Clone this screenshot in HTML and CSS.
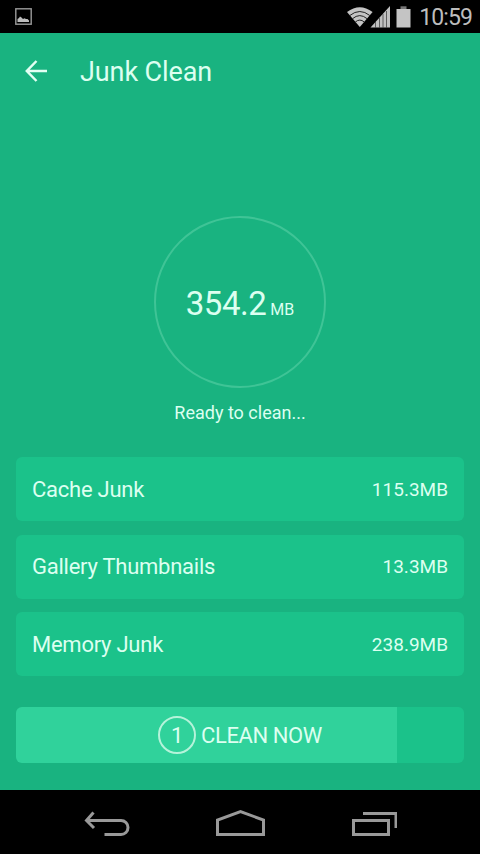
FILE: index.html
```
<!DOCTYPE html>
<html lang="en">
<head>
<meta charset="UTF-8">
<title>Junk Clean</title>
<link rel="stylesheet" href="styles.css">
</head>
<body>
<div class="phone">
  <div class="status">
    <svg class="picture" width="17" height="17" viewBox="0 0 17 17">
      <rect x=".8" y=".8" width="15.4" height="15.4" fill="none" stroke="#9a9a9a" stroke-width="1.4"/>
      <path d="M2.500 14v-3l1.500-1 1-1.500 1.500 1L8 11l1.500-.8 1.500.8h1.500l1.500 1.500V14z" fill="#bdbdbd"/>
    </svg>
    <div class="status-right">
      <svg width="64" height="22" viewBox="0 0 64 22">
        <path d="M12.800 21L0 6Q12.800-3.500 25.600 6z" fill="#c4c4c4"/>
        <g fill="none" stroke="#222" stroke-width="1">
          <path d="M2.800 9.500Q12.800 1.500 22.800 9.500"/>
          <path d="M5.500 12.700Q12.800 6.500 20.100 12.700"/>
          <path d="M8.300 16Q12.800 12.200 17.300 16"/>
        </g>
        <path d="M23.500 21.500L43 0V21.500z" fill="#c0c0c0"/>
        <path d="M28.500 16v6M32.500 12v10M36 8v14M39.500 5v17" stroke="#444" stroke-width=".8"/>
        <path d="M49.500 3h14v18.500h-14z" fill="#c4c4c4"/>
        <path d="M53.500 .300h6v2.700h-6z" fill="#777"/>
      </svg>
      <span class="clock">10:59</span>
    </div>
  </div>

  <div class="app">
    <div class="head">
      <svg width="24" height="24" viewBox="0 0 24 24" fill="none" stroke="#e2fff3" stroke-width="2.500">
        <path d="M11.500 2L1.800 12l9.700 10M2 12h20"/>
      </svg>
      <h1>Junk Clean</h1>
    </div>

    <div class="circle">
      <span class="total">354.2</span>
      <span class="unit">MB</span>
    </div>
    <p class="ready">Ready to clean...</p>

    <div class="list">
      <div class="item"><span>Cache Junk</span><span class="size">115.3MB</span></div>
      <div class="item"><span>Gallery Thumbnails</span><span class="size">13.3MB</span></div>
      <div class="item"><span>Memory Junk</span><span class="size">238.9MB</span></div>
    </div>

    <button class="clean">
      <span class="count">1</span>
      <span>CLEAN NOW</span>
    </button>
  </div>

  <div class="nav">
    <svg width="46" height="26" viewBox="0 0 46 26">
      <path d="M9.500 1.500L2.500 9.500l7.500 7.500M2.500 9.500H37a6.800 6.800 0 0 1 0 14H20.500"/>
    </svg>
    <svg width="50" height="28" viewBox="0 0 50 28">
      <path d="M1.500 24.500V10L24.500 1.600 47.500 10V24.500z"/>
    </svg>
    <svg width="46" height="26" viewBox="0 0 46 26">
      <path d="M2.500 9.500h35v14h-35zM12 2.500h33V17"/>
    </svg>
  </div>
</div>
</body>
</html>
```
FILE: styles.css
```
* {
  margin: 0;
  padding: 0;
  box-sizing: border-box;
}
body {
  background: #000;
  font-family: Roboto, sans-serif;
  color: #dcfff0;
}
.phone {
  width: 480px;
  height: 854px;
  display: flex;
  flex-direction: column;
  overflow: hidden;
}
.status {
  height: 33px;
  display: flex;
  justify-content: space-between;
  align-items: center;
  padding: 0 8px 0 15px;
}
.status-right {
  display: flex;
  align-items: center;
  gap: 8px;
}
.clock {
  font-size: 23px;
  letter-spacing: -0.9px;
  line-height: 33px;
  color: #bdbdbd;
  padding-top: 2px;
}
.app {
  height: 757px;
  background: #19b380;
  padding: 0 16px;
}
.head {
  height: 76px;
  display: flex;
  align-items: center;
  gap: 31px;
  padding-left: 9px;
}
.head h1 {
  font-size: 27px;
  font-weight: 400;
  line-height: 32px;
  padding-top: 2px;
  letter-spacing: -0.1px;
}
.circle {
  width: 172px;
  height: 172px;
  margin: 107px auto 0;
  border: 2px solid #3fc496;
  border-radius: 50%;
  display: flex;
  justify-content: center;
  align-items: baseline;
  gap: 4px;
  line-height: 172px;
}
.total {
  font-size: 33px;
  letter-spacing: -0.5px;
}
.unit {
  font-size: 16px;
}
.ready {
  margin-top: 13px;
  font-size: 18px;
  line-height: 24px;
  text-align: center;
}
.list {
  margin-top: 32px;
  display: flex;
  flex-direction: column;
  gap: 13.5px;
}
.item {
  height: 64px;
  padding: 0 16px;
  display: flex;
  justify-content: space-between;
  align-items: center;
  background: #1bc28a;
  border-radius: 6px;
  font-size: 22px;
  letter-spacing: -0.25px;
}
.size {
  font-size: 19px;
  letter-spacing: 0;
}
.clean {
  width: 100%;
  height: 56px;
  margin-top: 31px;
  display: flex;
  justify-content: center;
  align-items: center;
  gap: 5px;
  border: 0;
  border-radius: 6px;
  background: linear-gradient(to right, #30d29b 381px, #1bc28a 381px);
  font: 22px Roboto, sans-serif;
  letter-spacing: -0.4px;
  color: inherit;
}
.count {
  width: 38px;
  height: 38px;
  border: 2px solid #b5f3da;
  border-radius: 50%;
  line-height: 36px;
}
.nav {
  flex: 1;
  display: flex;
  justify-content: space-between;
  align-items: center;
  padding: 3px 83px 0 84px;
}
.nav svg {
  fill: none;
  stroke: #999;
  stroke-width: 3;
}
```
